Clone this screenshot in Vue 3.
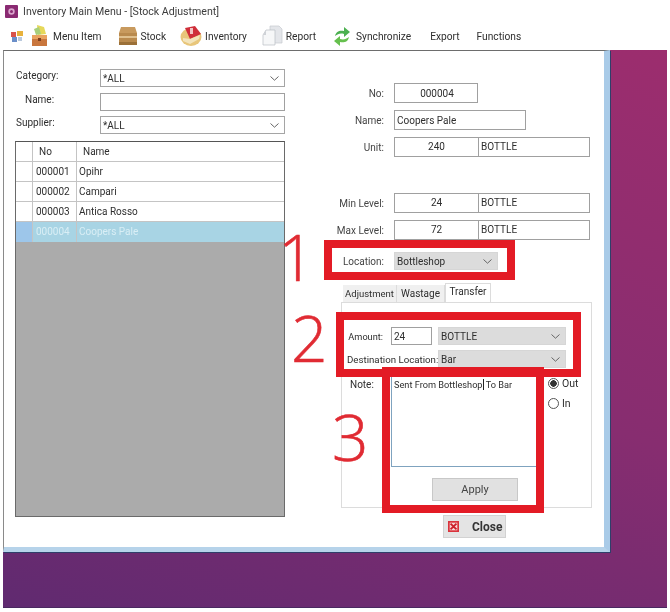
<script setup>
const rows = [
  { no: '000001', name: 'Opihr' },
  { no: '000002', name: 'Campari' },
  { no: '000003', name: 'Antica Rosso' },
  { no: '000004', name: 'Coopers Pale', selected: true },
];
</script>

<template>
  <div class="screen">
    <div class="titlebar">
      <svg class="app-icon" width="13" height="13" viewBox="0 0 13 13">
        <rect width="13" height="13" rx="1" fill="#8a2a72" />
        <circle cx="6.5" cy="6.5" r="3.2" fill="#d9a5cc" />
        <circle cx="6.5" cy="6.5" r="1.5" fill="#8a2a72" />
      </svg>
      <span>Inventory Main Menu - [Stock Adjustment]</span>
    </div>

    <div class="toolbar">
      <svg class="mini-icon" width="12" height="11" viewBox="0 0 12 11">
        <rect x="0" y="1" width="5" height="5" fill="#d9534a" />
        <rect x="6" y="0" width="6" height="5" fill="#e8b23c" />
        <rect x="1" y="6" width="5" height="5" fill="#6b8fc9" />
        <rect x="7" y="6" width="4" height="4" fill="#b9c9dd" />
      </svg>
      <div class="tool tool--menu">
        <svg width="17" height="24" viewBox="0 0 17 24">
          <path d="M6 1 L13 3 L15 10 L7 11 Z" fill="#e6d85a" />
          <path d="M3 5 L8 3 L10 10 L5 11 Z" fill="#a8cf7a" />
          <rect x="1" y="11" width="15" height="11" fill="#c9763d" />
          <rect x="1" y="11" width="15" height="4" fill="#e9a35f" />
          <rect x="7" y="14" width="3" height="3" fill="#7b3f1c" />
        </svg>
        <span>Menu Item</span>
      </div>
      <div class="tool tool--stock">
        <svg width="18" height="20" viewBox="0 0 18 20">
          <path d="M2 1 H16 L18 7 H0 Z" fill="#c89a5e" />
          <rect x="0" y="7" width="18" height="12" fill="#b98a4e" />
          <rect x="0" y="10" width="18" height="2" fill="#e0c08e" />
          <rect x="0" y="16" width="18" height="3" fill="#9b7038" />
        </svg>
        <span>Stock</span>
      </div>
      <div class="tool tool--inventory">
        <svg width="22" height="22" viewBox="0 0 22 22">
          <ellipse cx="11" cy="12" rx="10.5" ry="9" fill="#e8c67a" />
          <path d="M5 3 L15 1 L21 9 L10 14 Z" fill="#cf2f3a" />
          <path d="M3 13 L10 14 L20 10 L19 14 L10 19 L3 16 Z" fill="#f3e4bb" />
          <rect x="10" y="3" width="3" height="6" fill="#f2c4c4" />
        </svg>
        <span>Inventory</span>
      </div>
      <div class="tool tool--report">
        <svg width="21" height="22" viewBox="0 0 21 22">
          <path d="M8 1 H17 L20 4 V18 H8 Z" fill="#e4e6ea" stroke="#c6c9cf" stroke-width="0.7" />
          <path d="M4 5 H13 V20 H1 V10 Z" fill="#f6f7f8" stroke="#b9bdc4" stroke-width="0.7" />
          <path d="M1 10 L4 5 V10 Z" fill="#cfd2d7" />
        </svg>
        <span>Report</span>
      </div>
      <div class="tool tool--sync">
        <svg width="16" height="21" viewBox="0 0 16 21">
          <path d="M1 10 C2 5 6 4 10 5 L10 1 L16 6 L10 11 L10 8 C6 7 4 8 1 10 Z" fill="#4cb050" />
          <path d="M15 11 C14 16 10 17 6 16 L6 20 L0 15 L6 10 L6 13 C10 14 12 13 15 11 Z" fill="#66c04e" />
        </svg>
        <span>Synchronize</span>
      </div>
      <div class="tool tool--export"><span>Export</span></div>
      <div class="tool"><span>Functions</span></div>
    </div>

    <div class="desktop">
      <div class="dialog">
        <div class="left">
          <div class="filter">
            <label class="filter__label">Category:</label>
            <div class="combo combo--white filter__box">
              <span>*ALL</span>
              <svg class="chevron" width="9" height="5" viewBox="0 0 9 5"><path d="M0.5 0.5 L4.5 4.2 L8.5 0.5" /></svg>
            </div>
          </div>
          <div class="filter filter--name">
            <label class="filter__label filter__label--name">Name:</label>
            <div class="box filter__box"></div>
          </div>
          <div class="filter filter--supplier">
            <label class="filter__label">Supplier:</label>
            <div class="combo combo--white filter__box">
              <span>*ALL</span>
              <svg class="chevron" width="9" height="5" viewBox="0 0 9 5"><path d="M0.5 0.5 L4.5 4.2 L8.5 0.5" /></svg>
            </div>
          </div>

          <div class="grid">
            <div class="grid__row grid__row--head">
              <div class="grid__side"></div>
              <div class="grid__no">No</div>
              <div class="grid__name">Name</div>
            </div>
            <div
              v-for="row in rows"
              :key="row.no"
              class="grid__row"
              :class="{ 'grid__row--selected': row.selected }"
            >
              <div class="grid__side"></div>
              <div class="grid__no">{{ row.no }}</div>
              <div class="grid__name">{{ row.name }}</div>
            </div>
          </div>
        </div>

        <div class="right">
          <div class="field field--no">
            <label class="field__label">No:</label>
            <div class="box box--center box--no">000004</div>
          </div>
          <div class="field field--next">
            <label class="field__label">Name:</label>
            <div class="box box--name">Coopers Pale</div>
          </div>
          <div class="field field--next">
            <label class="field__label">Unit:</label>
            <div class="pair">
              <div class="pair__num">240</div>
              <div class="pair__unit">BOTTLE</div>
            </div>
          </div>
          <div class="field field--min">
            <label class="field__label">Min Level:</label>
            <div class="pair">
              <div class="pair__num">24</div>
              <div class="pair__unit">BOTTLE</div>
            </div>
          </div>
          <div class="field field--max">
            <label class="field__label">Max Level:</label>
            <div class="pair">
              <div class="pair__num">72</div>
              <div class="pair__unit">BOTTLE</div>
            </div>
          </div>
          <div class="field field--location">
            <label class="field__label">Location:</label>
            <div class="combo combo--location">
              <span>Bottleshop</span>
              <svg class="chevron" width="9" height="5" viewBox="0 0 9 5"><path d="M0.5 0.5 L4.5 4.2 L8.5 0.5" /></svg>
            </div>
          </div>

          <div class="tabs">
            <div class="tab tab--adjust">Adjustment</div>
            <div class="tab tab--waste">Wastage</div>
            <div class="tab tab--active">Transfer</div>
          </div>
          <div class="panel">
            <div class="amount">
              <label class="amount__label">Amount:</label>
              <div class="box amount__input">24</div>
              <div class="combo combo--wide">
                <span>BOTTLE</span>
                <svg class="chevron" width="9" height="5" viewBox="0 0 9 5"><path d="M0.5 0.5 L4.5 4.2 L8.5 0.5" /></svg>
              </div>
            </div>
            <div class="dest">
              <label class="dest__label">Destination Location:</label>
              <div class="combo combo--wide">
                <span>Bar</span>
                <svg class="chevron" width="9" height="5" viewBox="0 0 9 5"><path d="M0.5 0.5 L4.5 4.2 L8.5 0.5" /></svg>
              </div>
            </div>
            <div class="note">
              <label class="note__label">Note:</label>
              <div class="note__col">
                <div class="note__area">Sent From Bottleshop<i class="caret"></i> To Bar</div>
                <button class="apply" type="button">Apply</button>
              </div>
              <div class="radios">
                <div class="radio"><i class="radio__dot radio__dot--on"></i>Out</div>
                <div class="radio radio--in"><i class="radio__dot"></i>In</div>
              </div>
            </div>
          </div>
          <button class="close" type="button">
            <svg width="11" height="11" viewBox="0 0 13 13">
              <rect width="13" height="13" fill="#d9333c" />
              <rect x="2" y="2" width="9" height="9" fill="#f6d6d6" />
              <path d="M3 3 L10 10 M10 3 L3 10" stroke="#cc1f2a" stroke-width="2.2" />
            </svg>
            <span>Close</span>
          </button>
        </div>
      </div>
    </div>

    <!-- annotations drawn over the screenshot -->
    <div class="mark mark--1"></div>
    <div class="mark mark--2"></div>
    <div class="mark mark--3"></div>
    <span class="digit digit--1">1</span>
    <span class="digit digit--2">2</span>
    <span class="digit digit--3">3</span>
  </div>
</template>

<style>
html, body {
  margin: 0;
  background: #fff;
}
</style>

<style scoped>
.screen {
  position: relative;
  width: 670px;
  height: 612px;
  overflow: hidden;
  background: #fff;
  color: #2e2e2e;
  font-family: Roboto, "Liberation Sans", sans-serif;
  font-size: 10px;
  filter: blur(0.35px);
}

.titlebar {
  display: flex;
  align-items: center;
  gap: 5px;
  height: 22px;
  padding-left: 5px;
  font-size: 10.6px;
  color: #3c3c3c;
}

.toolbar {
  display: flex;
  align-items: center;
  height: 28px;
  padding-left: 11px;
  font-size: 10.2px;
}

.mini-icon {
  margin-right: 8px;
}

.tool {
  display: flex;
  align-items: center;
  gap: 4px;
  margin-right: 17px;
}

.tool--menu {
  gap: 5px;
}

.tool--stock {
  margin-right: 14px;
}

.tool--inventory {
  gap: 3px;
  margin-right: 15px;
}

.tool--report {
  gap: 3px;
  margin-right: 18px;
}

.tool--sync {
  gap: 6px;
  margin-right: 19px;
}

.desktop {
  width: 664px;
  height: 558px;
  margin-left: 3px;
  background: linear-gradient(200deg, #9c2d6e 0%, #872d70 50%, #602a70 100%);
  border-bottom: 1px solid #4a2860;
  box-sizing: border-box;
}

.dialog {
  display: flex;
  box-sizing: border-box;
  width: 607px;
  height: 502px;
  background: #fff;
  border-top: 1px solid #6d6d6d;
  border-left: 1px solid #8a8a8a;
  border-right: 6px solid #a9cbe8;
  border-bottom: 5px solid #b6d3ea;
  box-shadow: 1px 1px 0 #2f3f6a;
}

.left {
  width: 270px;
  margin-left: 11px;
  padding-top: 18px;
}

.filter {
  display: flex;
  align-items: center;
  height: 18px;
}

.filter--name {
  margin-top: 6px;
}

.filter--supplier {
  margin-top: 5px;
}

.filter__label {
  width: 85px;
  padding-left: 1px;
  padding-bottom: 5px;
  box-sizing: border-box;
}

.filter__label--name {
  padding-left: 10px;
}

.filter__box {
  flex: 1;
  height: 100%;
}

.box {
  display: flex;
  align-items: center;
  box-sizing: border-box;
  border: 1px solid #a0a0a0;
  background: #fff;
  padding-left: 2px;
}

.box--center {
  justify-content: center;
}

.combo {
  display: flex;
  align-items: center;
  justify-content: space-between;
  box-sizing: border-box;
  padding: 0 4px 0 2px;
  border: 1px solid #d6d6d6;
  background: #dcdcdc;
}

.combo--white {
  background: #fff;
  border-color: #a5a5a5;
}

.combo--location {
  width: 104px;
  height: 18px;
}

.combo--wide {
  width: 128px;
  height: 18px;
}

.chevron {
  margin-right: 1px;
  fill: none;
  stroke: #666;
  stroke-width: 1;
}

.grid {
  height: 376px;
  margin-top: 7px;
  box-sizing: border-box;
  background: #ababab;
  border: 1px solid #6a6a6a;
  border-top-color: #555;
}

.grid__row {
  display: flex;
  height: 20px;
  box-sizing: border-box;
  background: #fff;
  border-bottom: 1px solid #c4c4c4;
  line-height: 19px;
}

.grid__row--selected {
  background: #a8d4e4;
  color: #d9eef5;
  border-bottom: 0;
}

.grid__side {
  width: 16px;
  flex: none;
  border-right: 1px solid #c4c4c4;
}

.grid__row--selected .grid__side {
  background: #9dc6ea;
}

.grid__no {
  width: 44px;
  flex: none;
  box-sizing: border-box;
  padding-left: 3px;
  border-right: 1px solid #c4c4c4;
}

.grid__row--head .grid__no {
  padding-left: 6px;
}

.grid__name {
  padding-left: 2px;
}

.grid__row--head .grid__name {
  padding-left: 6px;
}

.right {
  width: 262px;
  margin-left: 45px;
  padding-top: 32px;
}

.field {
  display: flex;
  align-items: center;
  height: 20px;
}

.field--next {
  margin-top: 7px;
}

.field--min {
  margin-top: 36px;
}

.field--max {
  margin-top: 7px;
}

.field--location {
  margin-top: 12px;
  height: 18px;
}

.field__label {
  width: 54px;
  margin-right: 10px;
  text-align: right;
  color: #444;
}

.box--no {
  width: 84px;
  height: 20px;
}

.box--name {
  width: 132px;
  height: 20px;
}

.pair {
  display: flex;
  width: 196px;
  height: 20px;
  box-sizing: border-box;
  border: 1px solid #a0a0a0;
  line-height: 18px;
}

.pair__num {
  width: 83px;
  text-align: center;
  border-right: 1px solid #a0a0a0;
}

.pair__unit {
  padding-left: 2px;
}

.tabs {
  display: flex;
  align-items: flex-end;
  height: 19px;
  margin-top: 13px;
  margin-left: 13px;
}

.tab {
  box-sizing: border-box;
  height: 17px;
  padding-top: 3px;
  text-align: center;
  background: #f0f0f0;
  border-right: 1px solid #dcdcdc;
}

.tab--adjust {
  width: 54px;
  font-size: 9.5px;
}

.tab--waste {
  width: 48px;
}

.tab--active {
  width: 46px;
  height: 19px;
  padding-top: 2px;
  background: #fff;
  border: 1px solid #dcdcdc;
  border-bottom: 0;
}

.panel {
  box-sizing: border-box;
  width: 251px;
  height: 206px;
  margin-left: 11px;
  padding-top: 24px;
  border: 1px solid #dcdcdc;
}

.amount {
  display: flex;
  align-items: center;
  height: 18px;
}

.amount__label {
  width: 41px;
  margin-right: 8px;
  text-align: right;
  font-size: 9.2px;
}

.amount__input {
  width: 41px;
  height: 18px;
  margin-right: 6px;
}

.dest {
  display: flex;
  align-items: center;
  margin-top: 5px;
}

.dest__label {
  width: 96px;
  white-space: nowrap;
  padding-left: 5px;
  box-sizing: border-box;
  font-size: 9.7px;
}

.note {
  display: flex;
  margin-top: 9px;
}

.note__label {
  width: 49px;
  padding: 2px 0 0 8px;
  box-sizing: border-box;
}

.note__col {
  display: flex;
  flex-direction: column;
  align-items: center;
  width: 145px;
}

.note__area {
  box-sizing: border-box;
  width: 100%;
  height: 90px;
  padding: 2px 2px;
  border-bottom: 1px solid #7fa3bf;
  border-left: 1px solid #7fa3bf;
  font-size: 9.2px;
}

.caret {
  display: inline-block;
  width: 1px;
  height: 11px;
  margin-bottom: -2px;
  background: #222;
}

.apply {
  width: 86px;
  height: 23px;
  margin-top: 11px;
  margin-left: 23px;
  padding: 0;
  background: #e1e1e1;
  border: 1px solid #c8c8c8;
  color: #444;
  font: inherit;
  font-size: 11px;
}

.radios {
  margin-left: 12px;
  padding-top: 1px;
}

.radio {
  display: flex;
  align-items: center;
  gap: 3px;
  height: 11px;
  font-size: 10.5px;
}

.radio--in {
  margin-top: 9px;
}

.radio__dot {
  box-sizing: border-box;
  width: 11px;
  height: 11px;
  border: 1px solid #555;
  border-radius: 50%;
  background: #fff;
}

.radio__dot--on {
  background: radial-gradient(circle, #333 0 3px, #fff 3.5px);
}

.close {
  display: flex;
  align-items: center;
  gap: 13px;
  box-sizing: border-box;
  width: 63px;
  height: 23px;
  margin: 7px 0 0 113px;
  padding: 0 0 0 4px;
  background: #e4e4e4;
  border: 1px solid #d2d2d2;
  color: #333;
  font: inherit;
  font-size: 12px;
  font-weight: 700;
}

.mark {
  position: absolute;
  box-sizing: border-box;
  border: 8px solid #e31b25;
  pointer-events: none;
}

.mark--1 {
  left: 324px;
  top: 240px;
  width: 191px;
  height: 40px;
}

.mark--2 {
  left: 336px;
  top: 312px;
  width: 245px;
  height: 65px;
}

.mark--3 {
  left: 382px;
  top: 367px;
  width: 162px;
  height: 146px;
}

.digit {
  position: absolute;
  color: #e02b33;
  font-family: "Open Sans", sans-serif;
  font-weight: 300;
  font-size: 64px;
  line-height: 64px;
  -webkit-text-stroke: 0.6px #e02b33;
}

.digit--1 {
  left: 278px;
  top: 225px;
}

.digit--2 {
  left: 291px;
  top: 306px;
}

.digit--3 {
  left: 332px;
  top: 405px;
}
</style>
